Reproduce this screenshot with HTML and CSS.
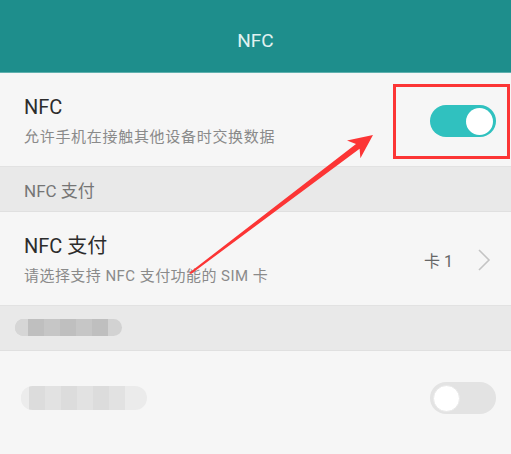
FILE: index.html
```html
<!DOCTYPE html>
<html lang="zh-CN">
<head>
    <meta charset="UTF-8">
    <meta name="viewport" content="width=device-width, initial-scale=1.0">
    <title>NFC</title>
    <link rel="stylesheet" href="styles.css">
</head>
<body>
    <header class="topbar">NFC</header>

    <div class="row">
        <div class="row-text">
            <div class="row-title">NFC</div>
            <div class="row-sub wide">允许手机在接触其他设备时交换数据</div>
        </div>
        <div class="switch on"><span class="knob"></span></div>
    </div>

    <div class="section">NFC 支付</div>

    <div class="row">
        <div class="row-text">
            <div class="row-title">NFC 支付</div>
            <div class="row-sub">请选择支持 NFC 支付功能的 SIM 卡</div>
        </div>
        <div class="row-value">卡 1</div>
        <svg class="chevron" width="14" height="24" viewBox="0 0 14 24">
            <polyline points="2,2 12,12 2,22" fill="none" stroke="#c4c4c4" stroke-width="1.6"/>
        </svg>
    </div>

    <div class="section">
        <div class="blur blur-dark">
            <i></i><i></i><i></i><i></i><i></i><i></i>
        </div>
    </div>

    <div class="row row-last">
        <div class="row-text">
            <div class="blur blur-light">
                <i></i><i></i><i></i><i></i><i></i><i></i><i></i>
            </div>
        </div>
        <div class="switch off"><span class="knob"></span></div>
    </div>

    <!-- annotations drawn on top of the screenshot -->
    <div class="mark-box"></div>
    <svg class="mark-arrow" width="511" height="454" viewBox="0 0 511 454">
        <polygon fill="#fc3535" points="189,273 356,144 347,140.6 373,135 360.4,158.2 359.6,148.8 191,274"/>
    </svg>
</body>
</html>
```

FILE: styles.css
```css
*{
    margin: 0;
    padding: 0;
    box-sizing: border-box;
}
body{
    width: 511px;
    height: 454px;
    overflow: hidden;
    background: #f6f6f6;
    font-family: Roboto, "Noto Sans CJK SC", sans-serif;
    position: relative;
}
.topbar{
    height: 73px;
    background: #1e8e8c;
    border-bottom: 1px solid #5fb0ae;
    color: #e2f2f1;
    font-size: 19px;
    display: flex;
    align-items: center;
    justify-content: center;
    padding-top: 9px;
}
.row{
    height: 94px;
    display: flex;
    align-items: center;
    padding: 3px 15px 0 24px;
    border-bottom: 1px solid #e2e2e2;
}
.row-last{
    border-bottom: none;
    padding-top: 0;
}
.row-text{
    flex: 1;
}
.row-title{
    font-size: 20px;
    color: #2c2c2c;
    line-height: 26px;
}
.row-sub{
    font-size: 15px;
    color: #8a8a8a;
    line-height: 22px;
    margin-top: 6px;
    letter-spacing: 0.45px;
}
.row-sub.wide{
    letter-spacing: 0.7px;
}
.row-value{
    font-size: 16px;
    color: #666;
    margin-right: 24px;
}
.chevron{
    margin-right: 5px;
}
.section{
    height: 45px;
    background: #e9e9e9;
    border-bottom: 1px solid #e0e0e0;
    display: flex;
    align-items: center;
    padding: 0 24px;
    font-size: 17px;
    color: #757575;
}
.switch{
    width: 66px;
    height: 32px;
    border-radius: 16px;
    display: flex;
    align-items: center;
    padding: 0 3px;
}
.switch.on{
    background: #30c1bf;
    justify-content: flex-end;
}
.switch.off{
    background: #e3e3e3;
    justify-content: flex-start;
}
.knob{
    width: 27px;
    height: 27px;
    border-radius: 50%;
    background: #fff;
}
.switch.off .knob{
    border: 1px solid #e9e9e9;
}
.blur{
    display: flex;
    border-radius: 9px;
    overflow: hidden;
}
.blur i{
    display: block;
    width: 16px;
}
.blur-dark{
    height: 17px;
    margin-left: -9px;
    margin-top: -2px;
    width: 107px;
    background: #d2d2d2;
}
.blur-dark i:nth-child(odd){ background: #c6c6c6; }
.blur-dark i:nth-child(even){ background: #bfbfbf; }
.blur-dark i:first-child{ background: #d6d6d6; width: 13px; }
.blur-light{
    height: 24px;
    margin-left: -3px;
    width: 126px;
    background: #ebebeb;
    border-radius: 12px;
}
.blur-light i:nth-child(odd){ background: #e2e2e2; }
.blur-light i:nth-child(even){ background: #dcdcdc; }
.blur-light i:first-child{ background: #ececec; width: 8px; }
.mark-box{
    position: absolute;
    left: 393px;
    top: 84px;
    width: 117px;
    height: 75px;
    border: 3px solid #fc3535;
}
.mark-arrow{
    position: absolute;
    left: 0;
    top: 0;
}
```
